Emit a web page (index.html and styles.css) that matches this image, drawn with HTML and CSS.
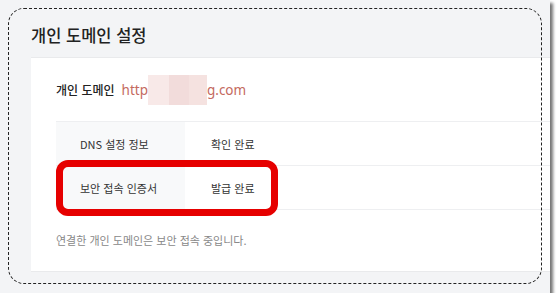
FILE: index.html
```html
<!DOCTYPE html>
<html lang="ko">
<head>
<meta charset="utf-8">
<link rel="stylesheet" href="styles.css">
</head>
<body>
<div class="shot">
  <h1 class="title">개인 도메인 설정</h1>
  <div class="card">
    <div class="domain">
      <span class="label">개인 도메인</span>
      <span class="url">http<span class="blur"></span>g.com</span>
    </div>
    <div class="table">
      <div class="row">
        <div class="key">DNS 설정 정보</div>
        <div class="val">확인 완료</div>
      </div>
      <div class="row">
        <div class="key">보안 접속 인증서</div>
        <div class="val">발급 완료</div>
      </div>
    </div>
    <p class="note">연결한 개인 도메인은 보안 접속 중입니다.</p>
  </div>
  <div class="dash"></div>
  <div class="mark"></div>
</div>
</body>
</html>
```

FILE: styles.css
```css
html, body {
  margin: 0;
  padding: 0;
  background: #ffffff;
}
body {
  font-family: "Noto Sans CJK KR", "Noto Sans", sans-serif;
  color: #222;
}
.shot {
  position: relative;
  width: 550px;
  height: 293px;
  background: #f3f4f6;
  box-shadow: 3px 3px 3px rgba(0, 0, 0, 0.55);
  overflow: hidden;
  padding: 22px 0 0 31px;
  box-sizing: border-box;
}
.title {
  margin: 0;
  font-size: 16.5px;
  font-weight: 500;
  line-height: 26px;
  color: #222;
}
.card {
  margin-top: 9px;
  width: 560px;
  height: 215px;
  background: #fff;
  border-top: 1px solid #e9eaec;
  border-bottom: 1px solid #e9eaec;
  padding-left: 25px;
  box-sizing: border-box;
}
.domain {
  display: flex;
  align-items: center;
  height: 63px;
}
.label {
  font-size: 12px;
  font-weight: 500;
  color: #222;
}
.url {
  display: flex;
  align-items: center;
  margin-left: 7px;
  font-family: "Noto Sans", sans-serif;
  font-size: 13.5px;
  color: #c46a60;
}
.blur {
  display: inline-block;
  width: 59px;
  height: 30px;
  background: linear-gradient(90deg, #f8e9e8 0%, #f8e9e8 35%, #f2dcdb 35%, #f2dcdb 70%, #f5e2e0 70%);
}
.table {
  border-top: 1px solid #eeeff1;
}
.row {
  display: flex;
  height: 43px;
  border-bottom: 1px solid #eeeff1;
  font-size: 11px;
  color: #333;
}
.key {
  width: 129px;
  background: #f8f9fa;
  display: flex;
  align-items: center;
  padding-left: 24px;
  box-sizing: border-box;
}
.val {
  display: flex;
  align-items: center;
  padding-left: 26px;
}
.note {
  margin: 22px 0 0;
  font-size: 11px;
  color: #888;
}
.dash {
  position: absolute;
  left: 8px;
  top: 8px;
  width: 534px;
  height: 276px;
  border: 1px dashed #222;
  border-radius: 16px;
  box-sizing: border-box;
}
.mark {
  position: absolute;
  left: 56px;
  top: 160px;
  width: 222px;
  height: 56px;
  border: 7px solid #e60000;
  border-radius: 12px;
  box-sizing: border-box;
}
```
